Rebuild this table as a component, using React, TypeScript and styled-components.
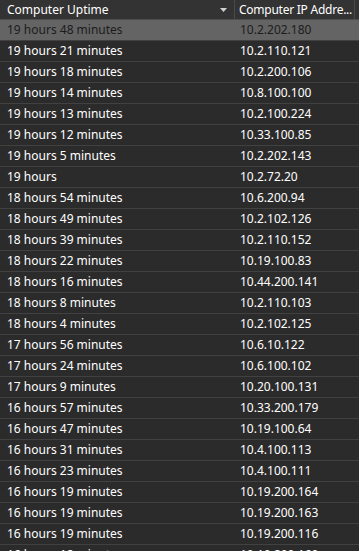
import React from 'react';
import styled, { createGlobalStyle } from 'styled-components';

const GlobalStyle = createGlobalStyle`
  html, body {
    margin: 0;
    padding: 0;
    background: #2b2b2b;
    overflow: hidden;
  }
  body {
    font-family: 'Segoe UI', 'Noto Sans', 'Open Sans', sans-serif;
  }
`;

const Grid = styled.div`
  width: 359px;
  height: 551px;
  background: #2b2b2b;
  overflow: hidden;
  font-size: 12px;
  color: #ffffff;
`;

const Columns = styled.div`
  display: grid;
  grid-template-columns: 235px 120px 1fr;
`;

const HeaderRow = styled(Columns)`
  height: 19px;
  background: #333333;
  border-bottom: 1px solid #4d4d4d;
`;

const HeaderCell = styled.div<{ $divider?: boolean; $tight?: boolean }>`
  display: flex;
  align-items: center;
  justify-content: space-between;
  padding-left: ${({ $tight }) => ($tight ? '4px' : '7px')};
  letter-spacing: ${({ $tight }) => ($tight ? '-0.25px' : 'normal')};
  border-right: ${({ $divider }) => ($divider ? '1px solid #4a4a4a' : 'none')};
  white-space: nowrap;
  overflow: hidden;
  line-height: 19px;
`;

const SortArrow = styled.svg`
  width: 7px;
  height: 4px;
  margin-right: 7px;
  flex: none;
`;

const Row = styled(Columns)<{ $selected?: boolean }>`
  height: 20px;
  border-bottom: 1px solid #414141;
  background: ${({ $selected }) => ($selected ? '#646464' : '#2b2b2b')};
  color: ${({ $selected }) => ($selected ? '#1c1c1c' : '#ffffff')};
`;

const Cell = styled.div<{ $first?: boolean }>`
  padding-left: ${({ $first }) => ($first ? '7px' : '5px')};
  line-height: 20px;
  white-space: nowrap;
  overflow: hidden;
`;

const rows: [string, string][] = [
  ['19 hours 48 minutes', '10.2.202.180'],
  ['19 hours 21 minutes', '10.2.110.121'],
  ['19 hours 18 minutes', '10.2.200.106'],
  ['19 hours 14 minutes', '10.8.100.100'],
  ['19 hours 13 minutes', '10.2.100.224'],
  ['19 hours 12 minutes', '10.33.100.85'],
  ['19 hours 5 minutes', '10.2.202.143'],
  ['19 hours', '10.2.72.20'],
  ['18 hours 54 minutes', '10.6.200.94'],
  ['18 hours 49 minutes', '10.2.102.126'],
  ['18 hours 39 minutes', '10.2.110.152'],
  ['18 hours 22 minutes', '10.19.100.83'],
  ['18 hours 16 minutes', '10.44.200.141'],
  ['18 hours 8 minutes', '10.2.110.103'],
  ['18 hours 4 minutes', '10.2.102.125'],
  ['17 hours 56 minutes', '10.6.10.122'],
  ['17 hours 24 minutes', '10.6.100.102'],
  ['17 hours 9 minutes', '10.20.100.131'],
  ['16 hours 57 minutes', '10.33.200.179'],
  ['16 hours 47 minutes', '10.19.100.64'],
  ['16 hours 31 minutes', '10.4.100.113'],
  ['16 hours 23 minutes', '10.4.100.111'],
  ['16 hours 19 minutes', '10.19.200.164'],
  ['16 hours 19 minutes', '10.19.200.163'],
  ['16 hours 19 minutes', '10.19.200.116'],
  ['16 hours 18 minutes', '10.19.200.160'],
];

export default function App() {
  return (
    <>
      <GlobalStyle />
      <Grid>
        <HeaderRow>
          <HeaderCell $divider>
            <span>Computer Uptime</span>
            <SortArrow viewBox="0 0 7 4">
              <path d="M0 0 H7 L3.5 4 Z" fill="#d0d0d0" />
            </SortArrow>
          </HeaderCell>
          <HeaderCell $divider $tight>
            <span>Computer IP Addre...</span>
          </HeaderCell>
          <HeaderCell />
        </HeaderRow>
        {rows.map(([uptime, ip], i) => (
          <Row key={i} $selected={i === 0}>
            <Cell $first>{uptime}</Cell>
            <Cell>{ip}</Cell>
            <Cell />
          </Row>
        ))}
      </Grid>
    </>
  );
}
